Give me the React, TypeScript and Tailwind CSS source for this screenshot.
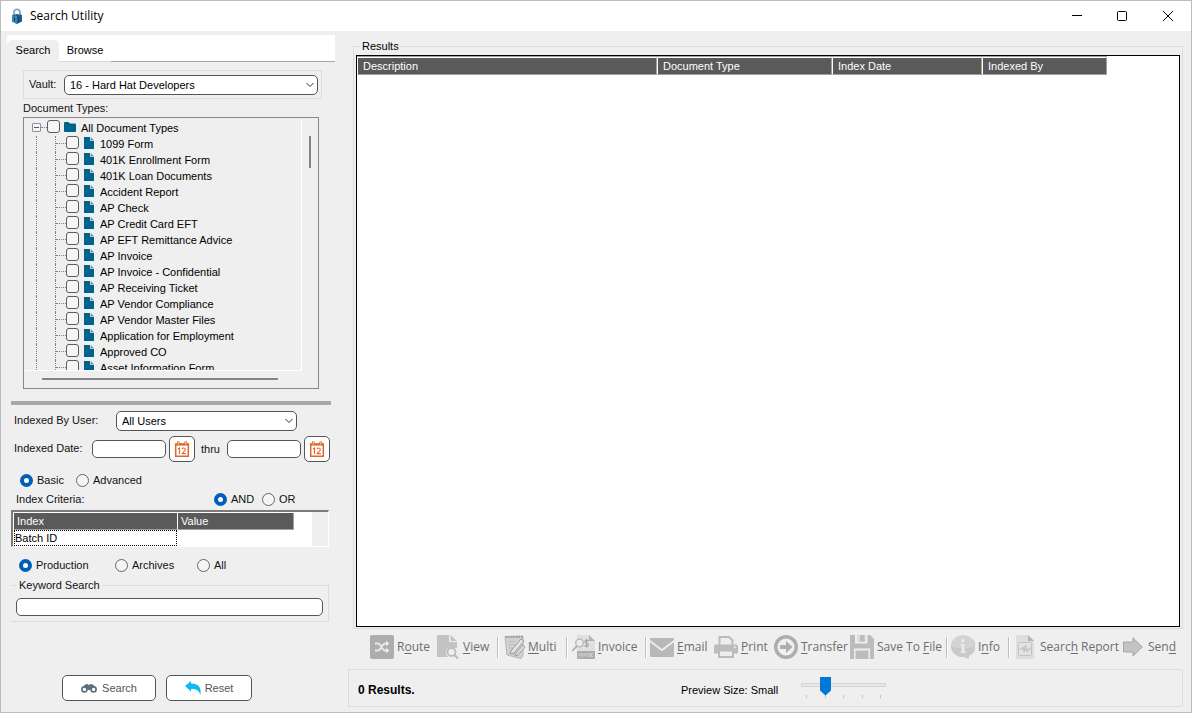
import React from "react";

const documentTypes = [
  "1099 Form",
  "401K Enrollment Form",
  "401K Loan Documents",
  "Accident Report",
  "AP Check",
  "AP Credit Card EFT",
  "AP EFT Remittance Advice",
  "AP Invoice",
  "AP Invoice - Confidential",
  "AP Receiving Ticket",
  "AP Vendor Compliance",
  "AP Vendor Master Files",
  "Application for Employment",
  "Approved CO",
  "Asset Information Form",
];

function Chevron() {
  return (
    <svg className="pointer-events-none absolute top-1/2 right-1 -mt-1 h-2 w-2" viewBox="0 0 8 8" fill="none" stroke="#333" aria-hidden="true">
      <path d="M0.5 2 L4 5.5 L7.5 2" />
    </svg>
  );
}

function DropDown({ id, className, value }: { id: string; className: string; value: string }) {
  return (
    <div className={`relative ${className}`}>
      <select id={id} className="block h-5 w-full appearance-none rounded-[5px] border border-[#555] bg-white pr-5 pl-[5px] leading-4 text-black">
        <option>{value}</option>
      </select>
      <Chevron />
    </div>
  );
}

function Tick({ id }: { id: string }) {
  return <input id={id} type="checkbox" className="h-[13px] w-[13px] shrink-0 appearance-none rounded-[3px] border border-[#5c5c5c] bg-[#f5f5f5] checked:bg-[#0067c0]" />;
}

function Radio({ name, label, checked, className }: { name: string; label: string; checked?: boolean; className: string }) {
  return (
    <label className={`flex items-center gap-1 ${className}`}>
      <input
        type="radio"
        name={name}
        defaultChecked={checked}
        className="h-[13px] w-[13px] shrink-0 appearance-none rounded-full border border-[#666] bg-[#f5f5f5] checked:border-4 checked:border-[#005fb8] checked:bg-white"
      />
      {label}
    </label>
  );
}

function DocIcon() {
  return (
    <svg className="mt-px h-3 w-[10px] shrink-0" viewBox="0 0 10 12" aria-hidden="true">
      <path d="M0 0H6V4H10V12H0Z" fill="#00638c" />
      <path d="M6.6 0L10 3.4H6.6Z" fill="#5f93ab" />
    </svg>
  );
}

function CalendarButton({ label }: { label: string }) {
  return (
    <button type="button" aria-label={label} className="flex h-[26px] w-[26px] shrink-0 items-center justify-center rounded-[5px] border border-[#555] bg-white">
      <svg className="h-4 w-4" viewBox="0 0 16 16" fill="none" stroke="#e0662b" aria-hidden="true">
        <path d="M1.7 3H14.3V15.2H1.7Z" strokeWidth="1.5" />
        <path d="M1.5 3.6H14.5" strokeWidth="2" />
        <path d="M4.3 0.5V4M11.7 0.5V4" strokeWidth="2.6" />
        <path d="M4.3 1.2V3.4M11.7 1.2V3.4" stroke="#fff" strokeWidth="0.8" />
        <path d="M4 8L5.5 7V13M8 8C8.5 6.5 11.5 6.7 11.3 8.7C11.2 10 8.7 11.3 8.2 12.6H11.8" strokeWidth="1.1" />
      </svg>
    </button>
  );
}

function Tool({ className, before, hot, after, children }: { className: string; before?: string; hot: string; after?: string; children: React.ReactNode }) {
  return (
    <button type="button" className={`flex h-[26px] shrink-0 items-center gap-[3px] whitespace-nowrap ${className}`}>
      {children}
      <span>
        {before}
        <span className="underline underline-offset-2">{hot}</span>
        {after}
      </span>
    </button>
  );
}

function Divider({ className }: { className: string }) {
  return <div className={`h-[21px] w-[2px] shrink-0 border-r border-l border-r-white border-l-[#bdbdbd] ${className}`} />;
}

function TitleBar() {
  return (
    <header className="flex h-[30px] shrink-0 items-center bg-white font-['Open_Sans',sans-serif] text-xs text-black">
      <svg className="ml-[10px] h-4 w-3" viewBox="0 0 12 16" aria-hidden="true">
        <path d="M3 8V4.5C3 0.3 9 0.3 9 4.5V8" fill="none" stroke="#8fa9b8" strokeWidth="1.8" />
        <path d="M1 7L6 6L11 7V13.5L6 16L1 13.5Z" fill="#1c5d8c" />
        <path d="M1 7L6 8V16L1 13.5Z" fill="#3b86b5" />
        <path d="M3.5 9.5V13M7.5 9V14" stroke="#103f66" />
      </svg>
      <h1 className="ml-[7px] flex-1">Search Utility</h1>
      <button type="button" aria-label="Minimize" className="flex h-full w-[45px] items-center justify-center">
        <svg className="h-[10px] w-[10px]" viewBox="0 0 10 10" stroke="#000" aria-hidden="true"><path d="M0 4.5H10" /></svg>
      </button>
      <button type="button" aria-label="Maximize" className="flex h-full w-[45px] items-center justify-center">
        <svg className="h-[10px] w-[10px]" viewBox="0 0 10 10" fill="none" stroke="#000" aria-hidden="true"><rect x="0.5" y="0.5" width="9" height="9" rx="1" /></svg>
      </button>
      <button type="button" aria-label="Close" className="flex h-full w-[47px] items-center justify-center">
        <svg className="h-[10px] w-[10px]" viewBox="0 0 10 10" stroke="#000" aria-hidden="true"><path d="M0 0L10 10M10 0L0 10" /></svg>
      </button>
    </header>
  );
}

function DocumentTree() {
  return (
    <div className="ml-[22px] h-[272px] w-[296px] border border-[#828790] px-px pt-[2px]">
      <div className="flex">
        <ul className="h-[251px] w-[277px] shrink-0 overflow-hidden border-r border-b border-white text-black">
          <li className="flex h-4">
            <svg className="mt-[3px] ml-[7px] h-[9px] w-[9px]" viewBox="0 0 9 9" fill="#f5f5f5" stroke="#919191" aria-hidden="true">
              <rect x="0.5" y="0.5" width="8" height="8" rx="0.5" />
              <path d="M2 4.5H7" stroke="#3a57a8" />
            </svg>
            <span className="h-2 w-[6px] border-b border-dotted border-[#808080]" />
            <label className="flex">
              <Tick id="all-types" />
              <svg className="mt-[2px] ml-1 h-[10px] w-3" viewBox="0 0 12 10" fill="#00638c" aria-hidden="true">
                <path d="M0 1Q0 0 1 0H4.5L6 1.5H11Q12 1.5 12 2.5V9Q12 10 11 10H1Q0 10 0 9Z" />
              </svg>
              <span className="ml-[5px] leading-4">All Document Types</span>
            </label>
          </li>
          {documentTypes.map((name, i) => (
            <li key={name} className="flex h-4">
              <span className="ml-[11px] w-[19px] border-l border-dotted border-[#808080]" />
              <span className="w-[11px] border-l border-dotted border-[#808080]">
                <span className="block h-2 border-b border-dotted border-[#808080]" />
              </span>
              <label className="flex whitespace-nowrap">
                <Tick id={`type-${i}`} />
                <span className="ml-[5px] flex"><DocIcon /></span>
                <span className="ml-[6px] leading-4">{name}</span>
              </label>
            </li>
          ))}
        </ul>
        <div className="flex flex-1 justify-center pt-4">
          <div className="h-8 w-[2px] bg-[#858585]" />
        </div>
      </div>
      <div className="mt-[7px] ml-[17px] h-[2px] w-[236px] bg-[#858585]" />
    </div>
  );
}

function IndexGrid() {
  return (
    <div className="ml-[10px] flex h-[37px] w-[318px] border-t-2 border-r border-b border-l-2 border-t-[#7b7b7b] border-r-white border-b-white border-l-[#7b7b7b] bg-white">
      <div className="flex-1 pt-px pl-px">
        <table className="w-[280px] table-fixed border-separate border-spacing-0 text-left">
          <colgroup>
            <col className="w-[163px]" />
            <col className="w-[117px]" />
          </colgroup>
          <thead>
            <tr className="h-[17px] bg-[#5a5a5a] text-white">
              <th className="border-b border-[#a0a0a0] p-0 pl-[3px] leading-[14px] font-normal">Index</th>
              <th className="border-r border-b border-l border-[#a0a0a0] border-l-white p-0 pl-[3px] leading-[14px] font-normal">Value</th>
            </tr>
          </thead>
          <tbody>
            <tr className="h-4 bg-white text-black">
              <td className="border border-dotted border-black p-0 leading-[14px]">Batch ID</td>
              <td className="p-0" />
            </tr>
          </tbody>
        </table>
      </div>
      <div className="w-4 bg-[#efefef]" />
    </div>
  );
}

function SearchPanel() {
  const field = "h-[18px] w-[74px] rounded-[5px] border border-[#555] bg-white px-1";
  return (
    <form className="flex w-[335px] shrink-0 flex-col pt-1" onSubmit={(e) => e.preventDefault()}>
      <div role="tablist" className="ml-[6px] flex h-[27px] w-[328px] items-end bg-white text-black">
        <button type="button" role="tab" aria-selected="true" className="h-[22px] w-[52px] rounded-t-[5px] bg-[#efefef] pb-[2px]">Search</button>
        <button type="button" role="tab" aria-selected="false" className="h-[22px] w-[52px] border-b border-[#d9d9d9] pb-px">Browse</button>
        <div className="h-px flex-1 bg-[#a6a6a6]" />
      </div>

      <div className="mt-2 ml-[22px] flex h-[29px] w-[299px] items-center border border-[#dcdcdc] pl-[5px]">
        <label htmlFor="vault" className="w-[35px]">Vault:</label>
        <DropDown id="vault" className="w-[254px]" value="16 - Hard Hat Developers" />
      </div>
      <h2 className="ml-[22px] h-[18px] pt-px leading-4">Document Types:</h2>
      <DocumentTree />

      <div className="mt-3 ml-[10px] h-1 w-[320px] bg-[#a8a8a8]" />

      <div className="mt-[6px] ml-[13px] flex h-5 items-center">
        <label htmlFor="user" className="w-[102px] pb-[2px]">Indexed By User:</label>
        <DropDown id="user" className="w-[181px]" value="All Users" />
      </div>
      <div className="mt-[5px] ml-[13px] flex h-[26px] items-center">
        <label htmlFor="date-from" className="w-[78px] pb-[2px]">Indexed Date:</label>
        <input id="date-from" type="text" className={field} />
        <span className="ml-[3px] flex"><CalendarButton label="Pick start date" /></span>
        <label htmlFor="date-to" className="w-8 pl-[6px]">thru</label>
        <input id="date-to" type="text" className={field} />
        <span className="ml-[3px] flex"><CalendarButton label="Pick end date" /></span>
      </div>

      <div className="mt-[11px] ml-[19px] flex h-[14px] items-center">
        <Radio name="mode" label="Basic" checked className="w-14" />
        <Radio name="mode" label="Advanced" className="" />
      </div>
      <div className="mt-[5px] ml-[15px] flex h-[14px] items-center">
        <span className="w-[198px]">Index Criteria:</span>
        <Radio name="join" label="AND" checked className="w-12" />
        <Radio name="join" label="OR" className="" />
      </div>
      <div className="h-1" />
      <IndexGrid />
      <div className="mt-[11px] ml-[18px] flex h-[14px] items-center">
        <Radio name="scope" label="Production" checked className="w-24" />
        <Radio name="scope" label="Archives" className="w-[82px]" />
        <Radio name="scope" label="All" className="" />
      </div>

      <fieldset className="mt-[7px] ml-[10px] w-[318px] border border-l-0 border-[#dcdcdc] px-[5px] pb-[5px]">
        <legend className="ml-px px-[2px] leading-3">
          <label htmlFor="keyword">Keyword Search</label>
        </legend>
        <input id="keyword" type="text" className="mt-[7px] block h-[18px] w-[307px] rounded-[5px] border border-[#555] bg-white px-1" />
      </fieldset>

      <div className="mt-[53px] ml-[61px] flex gap-[10px] text-[#555]">
        <button type="submit" className="flex h-[26px] w-[94px] items-center justify-center gap-[5px] rounded-[5px] border border-[#555] bg-white">
          <svg className="h-[10px] w-4" viewBox="0 0 16 10" fill="none" stroke="#5b6f7f" aria-hidden="true">
            <circle cx="3.4" cy="6.4" r="2.5" strokeWidth="1.6" />
            <circle cx="12.6" cy="6.4" r="2.5" strokeWidth="1.6" />
            <path d="M2 4L4 1.5L7 1L8 2.5L9 1L12 1.5L14 4L10.5 5L9.5 7H6.5L5.5 5Z" fill="#5b6f7f" stroke="none" />
          </svg>
          Search
        </button>
        <button type="button" className="flex h-[26px] w-[86px] items-center justify-center gap-1 rounded-[5px] border border-[#555] bg-white">
          <svg className="h-[14px] w-4" viewBox="0 0 16 14" fill="#0fbcf2" aria-hidden="true">
            <path d="M0 5L6 0V2.5C13.5 2.5 17 6.5 15.2 14C14.4 9.8 12 8 6 8V10.5Z" />
          </svg>
          Reset
        </button>
      </div>
    </form>
  );
}

const resultColumns = ["Description", "Document Type", "Index Date", "Indexed By"];

function Toolbar() {
  return (
    <div role="toolbar" className="flex h-9 shrink-0 items-center overflow-hidden pl-[22px] font-['Open_Sans',sans-serif] text-xs text-[#6d6d6d]">
      <Tool className="w-[67px]" before="R" hot="o" after="ute">
        <svg className="h-6 w-6" viewBox="0 0 24 24" aria-hidden="true">
          <rect width="24" height="24" rx="2" fill="#adadad" />
          <path d="M5 8.5H8C11 8.5 12 15.5 15 15.5H17.5M5 15.5H8C11 15.5 12 8.5 15 8.5H17.5" fill="none" stroke="#e9e9e9" strokeWidth="1.8" />
          <path d="M16 5.5L19.5 8.5L16 11.5ZM16 12.5L19.5 15.5L16 18.5Z" fill="#e9e9e9" />
        </svg>
      </Tool>
      <Tool className="w-[60px]" hot="V" after="iew">
        <svg className="h-6 w-[23px]" viewBox="0 0 23 24" aria-hidden="true">
          <path d="M0 0H12V7H20V13H11C8 16 9 20 11 22H0Z" fill="#c3c3c3" />
          <path d="M13.5 0L20 6H13.5Z" fill="#c3c3c3" />
          <circle cx="14.5" cy="17" r="4" fill="#efefef" stroke="#bdbdbd" strokeWidth="1.8" />
          <path d="M17.5 20L21 23.5" stroke="#bdbdbd" strokeWidth="2.2" />
        </svg>
      </Tool>
      <Divider className="mr-[5px]" />
      <Tool className="w-[62px]" hot="M" after="ulti">
        <svg className="h-6 w-[21px]" viewBox="0 0 21 24" fill="none" stroke="#a3a3a3" aria-hidden="true">
          <path d="M1 1.5L19 1V20L17 23.5L3 20Z" fill="#d2d2d2" stroke="#b5b5b5" />
          <path d="M2 2H19" stroke="#9a9a9a" strokeWidth="2" strokeDasharray="1.5 1" />
          <path d="M4 7L12 6M4 10L11 9.5M5 13L9 13M5 18L15 20" stroke="#b8b8b8" />
          <path d="M7 16L17 4L20 6L10 18L6 19Z" fill="#e4e4e4" stroke="#9d9d9d" />
          <path d="M12 18L19 10L21 12L14 20L11 21Z" fill="#dedede" stroke="#9d9d9d" />
        </svg>
      </Tool>
      <Divider className="mr-1" />
      <Tool className="w-[73px]" hot="I" after="nvoice">
        <svg className="h-6 w-[23px]" viewBox="0 0 23 24" aria-hidden="true">
          <path d="M5 0H17L23 6V17H5Z" fill="#e0e0e0" />
          <path d="M17 0L23 6H17Z" fill="#b3b3b3" />
          <rect x="5" y="16" width="18" height="8" fill="#adadad" />
          <path d="M7 18.5V21.5M9 21.5V18.5L11 21.5V18.5M12.5 18.5L13.5 21.5L14.5 18.5M16 18.5H18V21.5H16ZM21 18.5H19.5V21.5H21" fill="none" stroke="#d9d9d9" strokeWidth="0.8" />
          <circle cx="7.5" cy="8" r="3.8" fill="#ececec" stroke="#b3b3b3" strokeWidth="1.3" />
          <path d="M5 11L0 16" stroke="#b3b3b3" strokeWidth="1.8" />
          <path d="M16.5 6C15 4.5 12.8 5 12.8 6.8C12.8 8.5 16.4 7.8 16.4 9.8C16.4 11.6 13.8 11.8 12.5 10.5M14.6 4V12.5" fill="none" stroke="#a3a3a3" strokeWidth="1.1" />
        </svg>
      </Tool>
      <Divider className="mr-[3px]" />
      <Tool className="w-[64px]" hot="E" after="mail">
        <svg className="h-[19px] w-6" viewBox="0 0 24 19" fill="#b8b8b8" aria-hidden="true">
          <path d="M1 0H23Q24 0 24 1V2L12 11L0 2V1Q0 0 1 0Z" />
          <path d="M0 4.3L12 13.2L24 4.3V18Q24 19 23 19H1Q0 19 0 18Z" />
        </svg>
      </Tool>
      <Tool className="w-[60px]" hot="P" after="rint">
        <svg className="h-[22px] w-6" viewBox="0 0 24 22" aria-hidden="true">
          <path d="M5.5 9V1H15L18.5 4.5V9" fill="#ededed" stroke="#bcbcbc" strokeWidth="2" />
          <path d="M2 8.5H22Q24 8.5 24 10.5V17.5H0V10.5Q0 8.5 2 8.5Z" fill="#bcbcbc" />
          <rect x="5" y="14.5" width="14" height="6.5" fill="#ededed" stroke="#bcbcbc" strokeWidth="2" />
          <circle cx="20.8" cy="11.3" r="1" fill="#ededed" />
        </svg>
      </Tool>
      <Tool className="w-[76px]" hot="T" after="ransfer">
        <svg className="h-6 w-6" viewBox="0 0 24 24" aria-hidden="true">
          <circle cx="12" cy="12" r="10.3" fill="none" stroke="#adadad" strokeWidth="3.4" />
          <path d="M6 10H12V6L18.5 12L12 18V14H6Z" fill="#adadad" />
        </svg>
      </Tool>
      <Tool className="w-[96px]" before="Save To " hot="F" after="ile">
        <svg className="h-6 w-6" viewBox="0 0 24 24" aria-hidden="true">
          <path d="M0 0H5V8.5H17.5V0H20L24 4V24H0Z" fill="#bcbcbc" />
          <path d="M7 0H16V7H7Z" fill="#dedede" />
          <rect x="10" y="0" width="4.5" height="6.5" fill="#bcbcbc" />
          <rect x="4" y="13.5" width="16" height="10.5" fill="#efefef" />
          <rect x="5.5" y="15.5" width="13" height="8.5" fill="#bcbcbc" />
        </svg>
      </Tool>
      <Divider className="mr-[3px]" />
      <Tool className="w-[57px]" before="I" hot="n" after="fo">
        <svg className="h-6 w-6" viewBox="0 0 24 24" aria-hidden="true">
          <path d="M12 0.5A11.5 10.8 0 0 1 18 21L17.5 24L13 22A11.5 10.8 0 1 1 12 0.5Z" fill="#c9c9c9" />
          <path d="M12 0.5A11.5 10.8 0 0 1 23.5 12C16 14 8 14 0.5 11A11.5 10.8 0 0 1 12 0.5Z" fill="#d3d3d3" />
          <circle cx="12" cy="5.5" r="1.7" fill="#ebebeb" />
          <path d="M9.5 9H13.3V16.5H15V18H9.5V16.5H10.8V10.5H9.5Z" fill="#ebebeb" />
        </svg>
      </Tool>
      <Divider className="mr-[6px]" />
      <Tool className="w-[107px]" before="Searc" hot="h" after=" Report">
        <svg className="mr-[3px] h-6 w-[18px]" viewBox="0 0 18 24" aria-hidden="true">
          <path d="M0 0H12L18 6V24H0Z" fill="#dedede" />
          <path d="M12 0L18 6H12Z" fill="#b3b3b3" />
          <rect x="2.5" y="7.5" width="13" height="13" rx="1" fill="#e2e2e2" stroke="#c2c2c2" />
          <path d="M3.5 14H6L7 12L8 17L9.5 10L11 17L12 14H15" fill="none" stroke="#bdbdbd" />
        </svg>
      </Tool>
      <Tool className="" before="Sen" hot="d">
        <svg className="mr-[2px] h-5 w-5" viewBox="0 0 20 20" fill="#c3c3c3" stroke="#a6a6a6" aria-hidden="true">
          <path d="M0.5 5H10V0.8L19.3 10L10 19.2V15H0.5Z" />
        </svg>
      </Tool>
    </div>
  );
}

function StatusBar() {
  return (
    <div className="mt-1 mb-[5px] flex h-[38px] shrink-0 items-center border border-[#dcdcdc] pt-1 pl-[9px] text-black">
      <span className="w-[323px] text-xs font-bold">0 Results.</span>
      <label htmlFor="preview" className="w-[120px]">Preview Size: Small</label>
      <div className="w-[85px] self-start pt-px">
        <input
          id="preview"
          type="range"
          min="1"
          max="5"
          defaultValue="2"
          className="block h-[19px] w-full appearance-none bg-transparent [&::-webkit-slider-runnable-track]:h-1 [&::-webkit-slider-runnable-track]:border [&::-webkit-slider-runnable-track]:border-[#d3d5d3] [&::-webkit-slider-runnable-track]:bg-[#e7e9e8] [&::-webkit-slider-thumb]:-mt-[7px] [&::-webkit-slider-thumb]:h-[19px] [&::-webkit-slider-thumb]:w-[11px] [&::-webkit-slider-thumb]:appearance-none [&::-webkit-slider-thumb]:bg-[#0078d7] [&::-webkit-slider-thumb]:[clip-path:polygon(0_0,100%_0,100%_74%,50%_100%,0_74%)]"
        />
        <div className="flex justify-between px-[5px] pt-px">
          {[1, 2, 3, 4, 5].map((n) => (
            <span key={n} className="h-[3px] w-px bg-[#c4c4c4]" />
          ))}
        </div>
      </div>
    </div>
  );
}

function ResultsPanel() {
  return (
    <section className="ml-3 flex min-w-0 flex-1 flex-col pt-2 pr-2">
      <fieldset className="ml-[5px] flex min-w-0 flex-1 flex-col border border-[#dcdcdc] px-[2px] pb-px">
        <legend className="ml-1 px-[2px] leading-[14px] text-black">Results</legend>
        <div className="mt-[2px] flex-1 border border-black bg-white">
          <table className="w-[750px] table-fixed border-separate border-spacing-0 border-t border-[#a0a0a0] text-left text-white">
            <colgroup>
              <col className="w-[300px]" />
              <col className="w-[175px]" />
              <col className="w-[150px]" />
              <col className="w-[125px]" />
            </colgroup>
            <thead>
              <tr className="h-[17px] bg-[#5a5a5a]">
                {resultColumns.map((name) => (
                  <th key={name} className="border border-[#a0a0a0] border-t-white border-l-white p-0 pt-px pl-[5px] leading-[15px] font-normal">
                    {name}
                  </th>
                ))}
              </tr>
            </thead>
          </table>
        </div>
      </fieldset>
      <Toolbar />
      <StatusBar />
    </section>
  );
}

export default function App() {
  return (
    <div className="flex min-h-screen flex-col border border-[#bcbcbc] bg-[#efefef] font-['Liberation_Sans',Arial,sans-serif] text-[11px] text-[#111]">
      <TitleBar />
      <main className="flex flex-1">
        <SearchPanel />
        <ResultsPanel />
      </main>
    </div>
  );
}
